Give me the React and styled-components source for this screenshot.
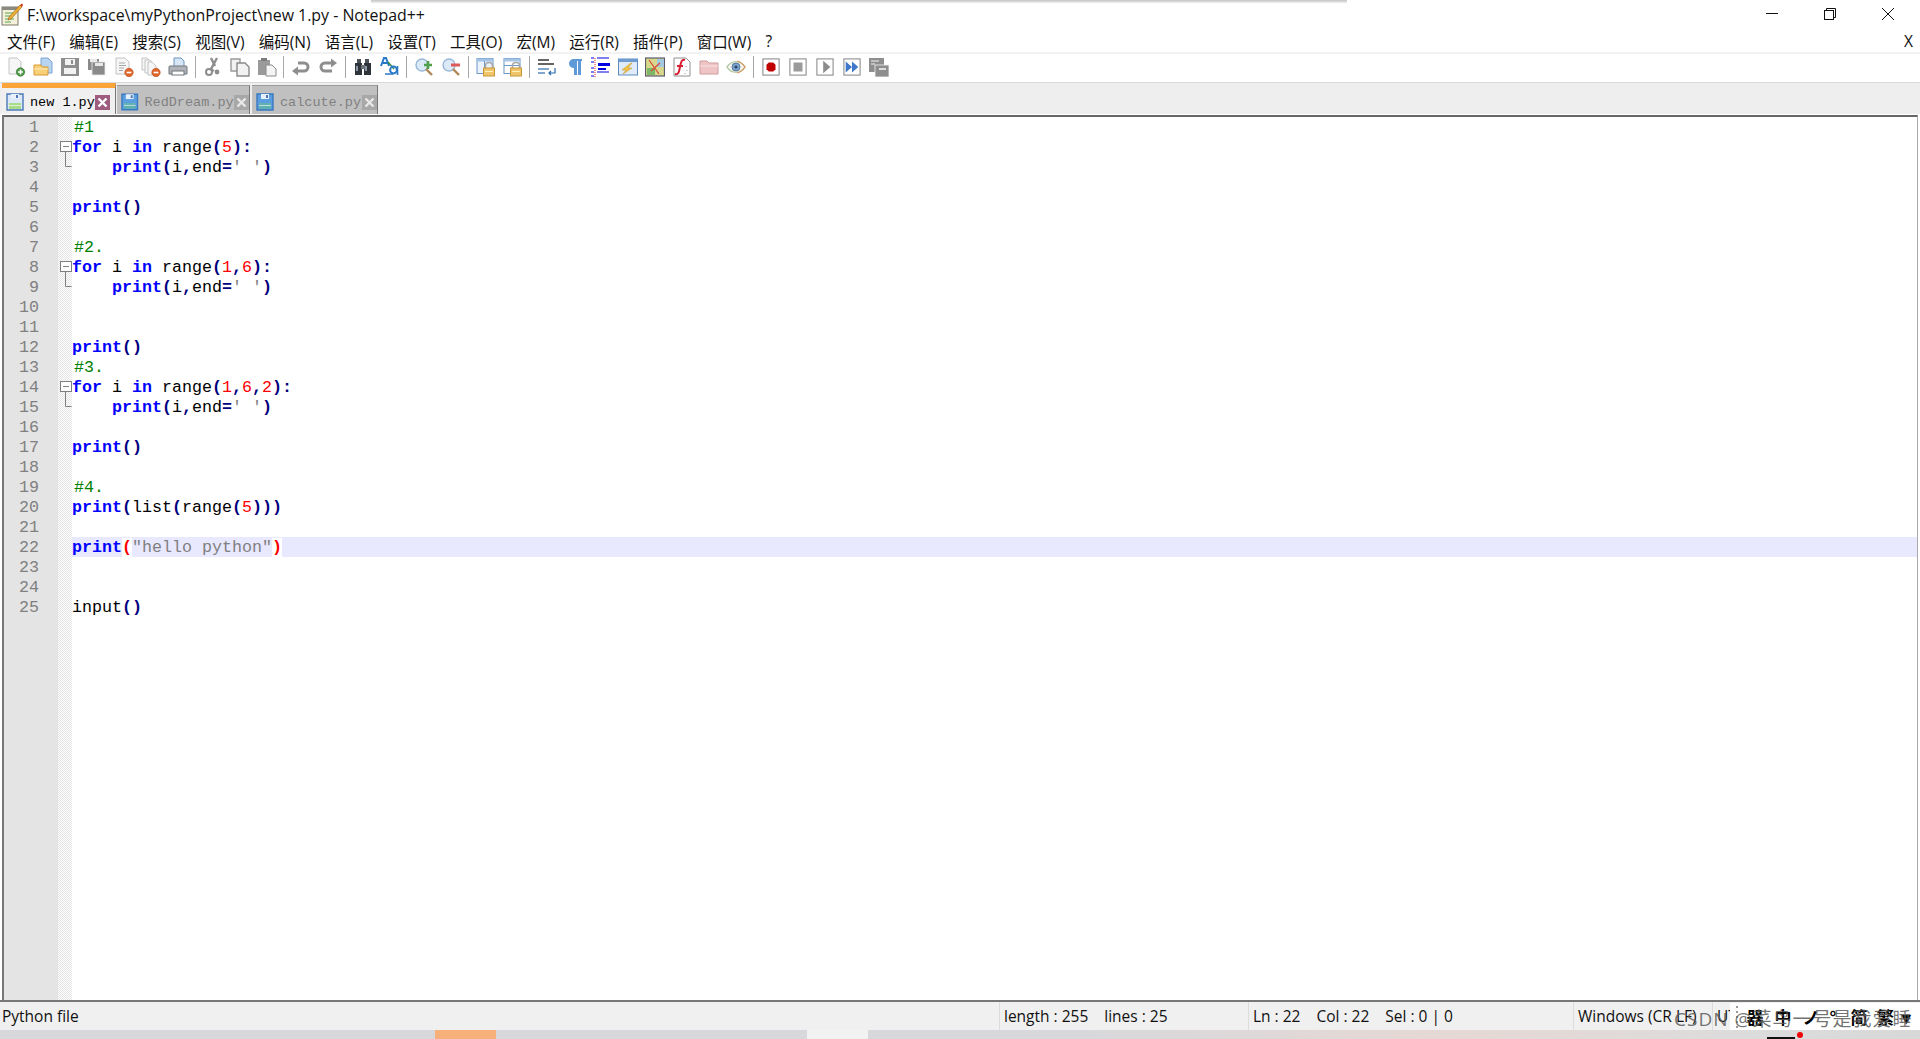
import React from 'react'
import styled, { createGlobalStyle } from 'styled-components'

const GlobalStyle = createGlobalStyle`
  html, body { margin: 0; padding: 0; background: #fff; overflow: hidden; }
  * { box-sizing: border-box; }
  #root { height: 100vh; }
`

const UI_FONT = `"Open Sans", "Noto Sans", "Noto Sans CJK SC", sans-serif`
const CODE_FONT = `"Liberation Mono", "Noto Sans CJK SC", monospace`

const Window = styled.div`
  position: relative;
  height: 1039px;
  display: flex;
  flex-direction: column;
  background: #fff;
  color: #000;
  font-family: ${UI_FONT};
  overflow: hidden;
`

const TopShadow = styled.div`
  position: absolute;
  left: 371px;
  top: 0;
  width: 976px;
  height: 3px;
  background: linear-gradient(#c4c4c4, #f0f0f0);
`

const TitleBar = styled.div`
  height: 30px;
  flex: none;
  display: flex;
  align-items: center;
  padding-left: 1px;
  font-size: 15.9px;
  color: #111;
`

const TitleText = styled.span`
  margin-left: 4px;
  white-space: nowrap;
`

const WindowControls = styled.div`
  margin-left: auto;
  margin-top: -2px;
  display: flex;
  align-items: center;
  padding-right: 26px;
  gap: 46px;
  svg { display: block; }
`

const MenuBar = styled.div`
  height: 22px;
  flex: none;
  display: flex;
  align-items: center;
  gap: 14.2px;
  padding: 0 7px;
  font-size: 15.5px;
  color: #111;
`

const MenuItem = styled.span`
  white-space: nowrap;
`

const MenuClose = styled.span`
  margin-left: auto;
  font-size: 15.5px;
`

const Toolbar = styled.div`
  height: 31px;
  flex: none;
  display: flex;
  align-items: center;
  padding-left: 2.5px;
  padding-bottom: 2px;
  border-top: 2px solid #f2f2f2;
  border-bottom: 1px solid #dadada;
`

const ToolButton = styled.div`
  width: 27px;
  height: 24px;
  flex: none;
  display: flex;
  align-items: center;
  justify-content: center;
`

const ToolSep = styled.div`
  width: 1px;
  height: 22px;
  flex: none;
  margin: 0 3.25px;
  background: #a8a8a8;
`

const TabStrip = styled.div`
  height: 32px;
  flex: none;
  display: flex;
  align-items: flex-end;
  gap: 1px;
  padding-left: 2px;
  background: #eeeeee;
  border-bottom: 1px solid #fff;
`

const Tab = styled.div`
  display: flex;
  align-items: center;
  width: ${p => p.$width}px;
  height: ${p => (p.$active ? 31 : 29)}px;
  margin-right: ${p => p.$gap || 0}px;
  padding-left: 3px;
  padding-top: ${p => (p.$active ? 2 : 4)}px;
  background: ${p => (p.$active ? '#f0f0f0' : '#c0c0c0')};
  border-top: ${p => (p.$active ? '5px solid #fba43a' : '1px solid #9a9a9a')};
  border-right: 1px solid #777;
  color: ${p => (p.$active ? '#000' : '#808080')};
  font-family: ${CODE_FONT};
  font-size: 13.5px;
  white-space: nowrap;
`

const TabLabel = styled.span`
  margin-left: 5px;
  width: ${p => p.$width}px;
`

const TabClose = styled.span`
  width: 15px;
  height: 15px;
  flex: none;
  display: flex;
  align-items: center;
  justify-content: center;
  background: ${p => (p.$active ? '#a05c7e' : '#a8a8a8')};
`

const Editor = styled.div`
  flex: 1;
  min-height: 0;
  display: flex;
  margin-left: 2px;
  margin-right: 2px;
  border-top: 2px solid #666;
  border-left: 2px solid #777;
  border-right: 1px solid #aaa;
  position: relative;
`

const Gutter = styled.div`
  width: 54px;
  flex: none;
  background: #e4e4e4;
`

const FoldMargin = styled.div`
  width: 14px;
  flex: none;
  background-color: #f4f4f4;
  background-image: conic-gradient(#e4e4e4 25%, #fff 0 50%, #e4e4e4 0 75%, #fff 0);
  background-size: 2px 2px;
`

const CodeArea = styled.div`
  flex: 1;
  min-width: 0;
  font-family: ${CODE_FONT};
  font-size: 16.67px;
`

const LineNo = styled.div`
  height: 20px;
  line-height: 22px;
  padding-right: 19px;
  text-align: right;
  color: #808080;
  font-family: ${CODE_FONT};
  font-size: 16.67px;
`

const FoldCell = styled.div`
  height: 20px;
  svg { display: block; }
`

const CodeLine = styled.div`
  height: 20px;
  line-height: 22px;
  white-space: pre;
  background: ${p => (p.$current ? '#e8e8ff' : 'transparent')};
  padding-left: ${p => (p.$comment ? 2 : 0)}px;
`

const Keyword = styled.span`
  color: #0000ff;
  font-weight: bold;
`
const Plain = styled.span`
  color: #000;
`
const Num = styled.span`
  color: #ff0000;
`
const Op = styled.span`
  color: #000080;
  font-weight: bold;
`
const Str = styled.span`
  color: #808080;
`
const Comment = styled.span`
  color: #008000;
`
const Brace = styled.span`
  color: #ff0000;
  font-weight: bold;
  background: #fff;
`

const StatusBar = styled.div`
  height: 30px;
  flex: none;
  display: flex;
  align-items: stretch;
  background: #f0f0f0;
  border-top: 2px solid #777;
  font-size: 15.5px;
  color: #111;
`

const StatusCell = styled.div`
  width: ${p => p.$width}px;
  flex: ${p => (p.$grow ? 1 : 'none')};
  display: flex;
  align-items: center;
  gap: 16px;
  padding-left: ${p => p.$pad ?? 4}px;
  border-right: ${p => (p.$grow ? 'none' : '1px solid #dcdcdc')};
  white-space: nowrap;
  overflow: hidden;
`

const ImeBar = styled.div`
  position: absolute;
  right: 0;
  bottom: 9px;
  width: 190px;
  height: 27px;
  display: flex;
  align-items: center;
  background: #fff;
  font-family: "Noto Sans CJK SC", sans-serif;
  font-size: 17px;
  font-weight: 700;
  color: #000;
`

const ImeGrip = styled.div`
  width: 2px;
  height: 22px;
  margin: 0 3px 0 6px;
  background: repeating-linear-gradient(#999 0 2px, transparent 2px 5px);
`

const ImeGlyph = styled.span`
  width: ${p => p.$width}px;
  flex: none;
  text-align: center;
`

const Watermark = styled.div`
  position: absolute;
  left: 1674px;
  bottom: 7px;
  font-family: "Open Sans", "Noto Sans CJK SC", sans-serif;
  font-size: 19px;
  letter-spacing: 1px;
  color: rgba(90, 90, 90, 0.85);
  white-space: nowrap;
`

const DesktopStrip = styled.div`
  position: relative;
  height: 9px;
  flex: none;
  display: flex;
`

const StripPart = styled.div`
  width: ${p => p.$width}px;
  flex: ${p => (p.$grow ? 1 : 'none')};
  background: ${p => p.$bg};
`

const TrayMark = styled.div`
  position: absolute;
  left: 1767px;
  bottom: 0;
  width: 28px;
  height: 2px;
  background: #111;
`

const TrayDot = styled.div`
  position: absolute;
  left: 1797px;
  top: 2px;
  width: 6px;
  height: 6px;
  border-radius: 50%;
  background: #f00000;
`

/* ---- toolbar icons, all drawn on a 20x20 grid ---- */

const Svg = ({ children, size = 20 }) => (
  <svg width={size} height={size} viewBox="0 0 20 20" fill="none">{children}</svg>
)

const Page = ({ x = 3, y = 1, w = 12, h = 16, fill = '#f6f6f6', stroke = '#c4c4c4' }) => (
  <path d={`M${x} ${y}h${w - 4}l4 4v${h - 4}h-${w}z`} fill={fill} stroke={stroke} />
)

const OrangeBadge = () => (
  <>
    <circle cx="15" cy="15.5" r="4.2" fill="#e0652a" stroke="#b84a18" strokeWidth=".6" />
    <rect x="12.6" y="14.7" width="4.8" height="1.6" fill="#fff" />
  </>
)

const Lock = () => (
  <>
    <path d="M9.5 11V8.5a3.5 3 0 0 1 7 0V11" stroke="#a8a8a8" strokeWidth="1.6" />
    <rect x="7.5" y="11" width="11" height="8" fill="#f0c468" stroke="#c89838" />
    <rect x="9" y="14" width="8" height="1" fill="#fff0c0" />
  </>
)

const LockWindow = ({ second }) => (
  <Svg>
    <rect x="1" y="1.5" width="16" height="15" fill={second ? '#fff' : '#eaf2fb'} stroke="#6d98c8" />
    <rect x="1" y="1.5" width="16" height="3" fill="#a4c4e6" />
    {second ? <rect x="1" y="8" width="16" height="1" fill="#6d98c8" /> : <rect x="8" y="4" width="1" height="12" fill="#6d98c8" />}
    <Lock />
  </Svg>
)

const MacroBox = ({ children }) => (
  <Svg size={18}>
    <rect x="1" y="1" width="18" height="18" fill="#fff" stroke="#8c8c8c" strokeWidth="1.2" />
    {children}
  </Svg>
)

const toolIcons = {
  newFile: (
    <Svg><Page /><circle cx="14.5" cy="15" r="4.2" fill="#4d9a45" stroke="#2f6e2b" strokeWidth=".6" />
      <path d="M12 15h5M14.5 12.5v5" stroke="#fff" strokeWidth="1.5" /></Svg>
  ),
  open: (
    <Svg>
      <path d="M8 1h7l4 4v11H8z" fill="#b8d4f0" stroke="#7ca4d0" />
      <path d="M1 8h7l1.5 2H15v8H1z" fill="#f8d078" stroke="#d89830" />
      <path d="M1 12h14" stroke="#fcecc0" />
    </Svg>
  ),
  save: (
    <Svg>
      <path d="M1 1h18v18H1z" fill="#8e8e8e" />
      <rect x="5" y="2" width="10" height="6" fill="#f2f2f2" />
      <rect x="11" y="3" width="2" height="4" fill="#8e8e8e" />
      <rect x="4" y="11" width="12" height="6" fill="#f2f2f2" />
    </Svg>
  ),
  saveAll: (
    <Svg>
      <rect x="1" y="2" width="11" height="11" fill="#8a8a8a" />
      <rect x="3" y="2" width="7" height="3" fill="#e8e8e8" />
      <rect x="5" y="5" width="13" height="13" fill="#8a8a8a" stroke="#e8e8e8" strokeWidth=".8" />
      <rect x="8" y="6" width="8" height="3" fill="#e8e8e8" />
    </Svg>
  ),
  closeFile: (
    <Svg><Page x={2} w={13} />
      <path d="M5 6h6M5 8.5h7M5 11h5M5 13.5h4" stroke="#a8a8a8" /><OrangeBadge /></Svg>
  ),
  closeAll: (
    <Svg>
      <Page x={1} y={1} w={9} h={12} />
      <Page x={4} y={3} w={9} h={13} />
      <Page x={7} y={5} w={8} h={13} />
      <OrangeBadge />
    </Svg>
  ),
  print: (
    <Svg>
      <path d="M6 1h7l3 3v6H6z" fill="#d6e6f6" stroke="#6a94c0" />
      <path d="M2 9h16a1 1 0 0 1 1 1v7H1v-7a1 1 0 0 1 1-1z" fill="#b0b4b8" stroke="#70767c" />
      <rect x="4" y="14" width="12" height="4" fill="#fff" stroke="#70767c" />
    </Svg>
  ),
  cut: (
    <Svg>
      <path d="M14 1l-6 11M8 1l4 8" stroke="#8c8c8c" strokeWidth="2.4" />
      <circle cx="6" cy="15" r="3" stroke="#8c8c8c" strokeWidth="2" />
      <circle cx="14" cy="15" r="2.4" fill="#8c8c8c" />
      <path d="M8 12l3 2" stroke="#8c8c8c" strokeWidth="2" />
    </Svg>
  ),
  copy: (
    <Svg>
      <path d="M1 2h9v12H1z" fill="#f2f2f2" stroke="#9a9a9a" strokeWidth="1.4" />
      <path d="M7 6h8l4 4v9H7z" fill="#f2f2f2" stroke="#8a8a8a" strokeWidth="1.4" />
    </Svg>
  ),
  paste: (
    <Svg>
      <path d="M1 3h12v15H1z" fill="#9a9a9a" />
      <rect x="4" y="1" width="6" height="3" fill="#7c7c7c" />
      <path d="M9 8h6l4 4v7H9z" fill="#f4f4f4" stroke="#8a8a8a" />
    </Svg>
  ),
  undo: (
    <Svg>
      <path d="M7 6h6a4 4 0 0 1 0 8H6" stroke="#8e8e8e" strokeWidth="3" />
      <path d="M1 14l6-4.5v9z" fill="#8e8e8e" />
    </Svg>
  ),
  redo: (
    <Svg>
      <path d="M13 6H7a4 4 0 0 0 0 8h7" stroke="#8e8e8e" strokeWidth="3" />
      <path d="M19 6l-6-4.5v9z" fill="#8e8e8e" />
    </Svg>
  ),
  find: (
    <Svg>
      <rect x="4" y="2" width="4" height="5" fill="#4a5058" />
      <rect x="12" y="2" width="4" height="5" fill="#4a5058" />
      <rect x="2" y="6" width="7" height="12" fill="#2e343a" />
      <rect x="11" y="6" width="7" height="12" fill="#2e343a" />
      <rect x="8" y="8" width="4" height="4" fill="#6a7078" />
      <rect x="3" y="9" width="2" height="5" fill="#8a98a8" />
      <rect x="12" y="9" width="2" height="5" fill="#8a98a8" />
    </Svg>
  ),
  replace: (
    <Svg>
      <path d="M1 9l3-8h2l3 8M2.5 6h5" stroke="#2a78c8" strokeWidth="2" />
      <path d="M8 5l6 7" stroke="#3a8a48" strokeWidth="1.5" />
      <circle cx="13.5" cy="13" r="3.4" stroke="#2a78c8" strokeWidth="2" />
      <path d="M17.5 9v9M5 17h8" stroke="#2a78c8" strokeWidth="1.6" />
    </Svg>
  ),
  zoomIn: (
    <Svg>
      <circle cx="8" cy="8" r="6" fill="#dceaf8" stroke="#9ab8d8" strokeWidth="1.4" />
      <path d="M12 12l6 6" stroke="#b08858" strokeWidth="2.4" />
      <path d="M10 8h8M14 4v8" stroke="#4ea04a" strokeWidth="2.6" />
    </Svg>
  ),
  zoomOut: (
    <Svg>
      <circle cx="8" cy="8" r="6" fill="#dceaf8" stroke="#9ab8d8" strokeWidth="1.4" />
      <path d="M12 12l6 6" stroke="#b08858" strokeWidth="2.4" />
      <path d="M10 8h9" stroke="#e05a5a" strokeWidth="3" />
    </Svg>
  ),
  lockOne: <LockWindow />,
  lockTwo: <LockWindow second />,
  wrap: (
    <Svg>
      <path d="M1 3h11M1 7h16" stroke="#333" strokeWidth="1.4" />
      <path d="M1 12h11M1 16h7" stroke="#5a8ac0" strokeWidth="1.6" />
      <path d="M18 11v5h-6M14 14l-2 2 2 2" stroke="#2a6ab0" strokeWidth="1.2" />
    </Svg>
  ),
  para: (
    <Svg>
      <path d="M9 2h9v2h-1v14h-3V4h-1v14h-3v-7a4.5 4.5 0 0 1 -1-9z" fill="#5e9ad8" />
    </Svg>
  ),
  indent: (
    <Svg>
      <path d="M4 1v19" stroke="#e02020" strokeWidth="1" strokeDasharray="1 1" />
      <path d="M0 1h3M6 1h12M0 15h3M6 15h12" stroke="#0000e0" strokeWidth="1.2" />
      <path d="M0 5h3M0 11h3M0 19h3" stroke="#0000e0" strokeWidth="1.2" />
      <rect x="7" y="6" width="12" height="3" fill="#0000e0" />
      <rect x="7" y="11" width="8" height="2" fill="#0000e0" />
    </Svg>
  ),
  bolt: (
    <Svg>
      <rect x="0.5" y="2" width="19" height="16" fill="#dfeafa" stroke="#5f8cc0" />
      <rect x="0.5" y="2" width="19" height="3" fill="#6f9cd0" />
      <path d="M13 6l-9 7h4l-3 4 9-6h-4l4-5z" fill="#f0c040" stroke="#c89820" strokeWidth=".5" />
    </Svg>
  ),
  map: (
    <Svg>
      <rect x="0.5" y="1" width="19" height="18" fill="#d8d88c" stroke="#5a5a6a" strokeWidth="1.2" />
      <rect x="12" y="2" width="7" height="8" fill="#a4c8e0" />
      <rect x="2" y="11" width="8" height="7" fill="#7cb868" />
      <path d="M4 3l10 14M15 6l-9 8" stroke="#d84838" strokeWidth="1.2" />
    </Svg>
  ),
  funcDoc: (
    <Svg>
      <Page x={2} w={16} h={18} stroke="#909090" fill="#fff" />
      <path d="M13 3c-4-1-4 3-5 7s-1 8-5 7M5 9h6" stroke="#d82030" strokeWidth="2" />
      <path d="M14 9v1M15 13v1M13 16v1" stroke="#a0a0a0" />
    </Svg>
  ),
  folder: (
    <Svg>
      <path d="M1 4h7l2 2h9v11H1z" fill="#eec4c4" stroke="#d09c9c" />
      <path d="M1 9h18" stroke="#f8e4e4" />
    </Svg>
  ),
  eye: (
    <Svg>
      <path d="M1 10c4-7 14-7 18 0-4 7-14 7-18 0z" fill="#f4f4ee" stroke="#a8c098" strokeWidth="1.2" />
      <path d="M11 4c4 1 6 3 8 6-2 3-4 5-8 6" stroke="#d89860" strokeWidth="1.2" />
      <circle cx="10" cy="10" r="4" fill="#7ca4d0" stroke="#587898" />
      <circle cx="10" cy="10" r="1.6" fill="#2c4868" />
    </Svg>
  ),
  record: (
    <MacroBox><path d="M7.5 5h5l2.5 2.5v5L12.500 15h-5L5 12.500v-5z" fill="#c00000" /></MacroBox>
  ),
  stop: (
    <MacroBox><rect x="5" y="5" width="10" height="10" fill="#9a9a9a" /></MacroBox>
  ),
  play: (
    <MacroBox><path d="M8 3l8 7-8 7z" fill="#8c8c8c" /></MacroBox>
  ),
  playMany: (
    <MacroBox><path d="M3 4l7 6-7 6zM10 4l7 6-7 6z" fill="#3f78c8" /></MacroBox>
  ),
  saveMacro: (
    <Svg>
      <rect x="0" y="1" width="15" height="14" fill="#8e8e8e" />
      <path d="M2 4h8M2 7h4" stroke="#f2f2f2" strokeWidth="1.2" />
      <rect x="6" y="8" width="14" height="12" fill="#8e8e8e" stroke="#f2f2f2" strokeWidth=".8" />
      <path d="M10 12h7" stroke="#f2f2f2" strokeWidth="1.6" />
    </Svg>
  ),
}

const toolbar = [
  'newFile', 'open', 'save', 'saveAll', 'closeFile', 'closeAll', 'print', '|',
  'cut', 'copy', 'paste', '|',
  'undo', 'redo', '|',
  'find', 'replace', '|',
  'zoomIn', 'zoomOut', '|',
  'lockOne', 'lockTwo', '|',
  'wrap', 'para', 'indent', 'bolt', 'map', 'funcDoc', 'folder', 'eye', '|',
  'record', 'stop', 'play', 'playMany', 'saveMacro',
]

const menus = ['文件(F)', '编辑(E)', '搜索(S)', '视图(V)', '编码(N)', '语言(L)', '设置(T)', '工具(O)', '宏(M)', '运行(R)', '插件(P)', '窗口(W)', '?']

const printRange = (...args) => [
  [Keyword, 'for'], [Plain, ' i '], [Keyword, 'in'], [Plain, ' range'], [Op, '('],
  ...args, [Op, ')'], [Op, ':'],
]
const printLoop = [
  [Plain, '    '], [Keyword, 'print'], [Op, '('], [Plain, 'i'], [Op, ','], [Plain, 'end'], [Op, '='], [Str, "' '"], [Op, ')'],
]
const printEmpty = [[Keyword, 'print'], [Op, '('], [Op, ')']]

const lines = [
  { code: [[Comment, '#1']], comment: true },
  { code: printRange([Num, '5']), fold: 'head' },
  { code: printLoop, fold: 'tail' },
  {},
  { code: printEmpty },
  {},
  { code: [[Comment, '#2.']], comment: true },
  { code: printRange([Num, '1'], [Op, ','], [Num, '6']), fold: 'head' },
  { code: printLoop, fold: 'tail' },
  {},
  {},
  { code: printEmpty },
  { code: [[Comment, '#3.']], comment: true },
  { code: printRange([Num, '1'], [Op, ','], [Num, '6'], [Op, ','], [Num, '2']), fold: 'head' },
  { code: printLoop, fold: 'tail' },
  {},
  { code: printEmpty },
  {},
  { code: [[Comment, '#4.']], comment: true },
  { code: [[Keyword, 'print'], [Op, '('], [Plain, 'list'], [Op, '('], [Plain, 'range'], [Op, '('], [Num, '5'], [Op, ')))']] },
  {},
  { code: [[Keyword, 'print'], [Brace, '('], [Str, '"hello python"'], [Brace, ')']], current: true },
  {},
  {},
  { code: [[Plain, 'input'], [Op, '('], [Op, ')']] },
]

const FoldMark = ({ type }) => (
  <svg width="14" height="20" viewBox="0 0 14 20" fill="none">
    {type === 'head' ? (
      <>
        <rect x="2.500" y="4.500" width="11" height="10" fill="#fff" stroke="#808080" />
        <path d="M5 9.500h6" stroke="#808080" />
        <path d="M7.500 14.500V20" stroke="#808080" />
      </>
    ) : (
      <path d="M7.500 0v9.500h6" stroke="#808080" />
    )}
  </svg>
)

const SaveIcon = ({ active }) => (
  <svg width="20" height="20" viewBox="0 0 20 20" fill="none">
    <path d="M2 2h16v16H2z" fill={active ? '#dce8f8' : '#5a9ee0'} stroke={active ? '#4a78b8' : '#3a78c0'} strokeWidth="1.4" />
    <rect x="6" y="2" width="8" height="5" fill="#e8f0fa" />
    <rect x="11" y="3" width="2" height="3" fill="#4a78b8" />
    <rect x="4" y="11" width="12" height="6" fill={active ? '#a8dc88' : '#60b0b0'} />
    <rect x="4" y="13" width="12" height="1" fill="#fff" opacity=".6" />
  </svg>
)

const CloseCross = ({ active }) => (
  <svg width="11" height="11" viewBox="0 0 11 11">
    <path d="M1.500 1.500l8 8M9.500 1.500l-8 8" stroke={active ? '#fff' : '#e8e8e8'} strokeWidth="2.400" />
  </svg>
)

const tabs = [
  { name: 'new 1.py', width: 114, label: 65, active: true },
  { name: 'RedDream.py', width: 133, label: 92, gap: 1 },
  { name: 'calcute.py', width: 126, label: 82 },
]

function App() {
  return (
    <Window>
      <GlobalStyle />
      <TopShadow />

      <TitleBar>
        <svg width="22" height="24" viewBox="0 0 22 24" fill="none">
          <rect x="1" y="4" width="16" height="18" fill="#f4f0dc" stroke="#7c7868" />
          <path d="M1 4h16v3H1z" fill="#8a8a80" />
          <path d="M4 10h9M4 13h7M4 16h9M4 19h6" stroke="#58a848" />
          <path d="M7 17l1-3L19 2l2 2L10 16z" fill="#e8b030" stroke="#a05820" strokeWidth=".6" />
          <path d="M19 2l2 2 1-2-1-1.500z" fill="#d03020" />
        </svg>
        <TitleText>F:\workspace\myPythonProject\new 1.py - Notepad++</TitleText>
        <WindowControls>
          <svg width="12" height="12" viewBox="0 0 12 12"><path d="M0 5.500h12" stroke="#111" /></svg>
          <svg width="12" height="12" viewBox="0 0 12 12" fill="none">
            <rect x=".5" y="2.500" width="9" height="9" stroke="#111" />
            <path d="M2.500 2.500v-2h9v9h-2" stroke="#111" />
          </svg>
          <svg width="12" height="12" viewBox="0 0 12 12"><path d="M0 0l12 12M12 0L0 12" stroke="#111" /></svg>
        </WindowControls>
      </TitleBar>

      <MenuBar>
        {menus.map(m => <MenuItem key={m}>{m}</MenuItem>)}
        <MenuClose>X</MenuClose>
      </MenuBar>

      <Toolbar>
        {toolbar.map((name, i) =>
          name === '|' ? <ToolSep key={i} /> : <ToolButton key={i}>{toolIcons[name]}</ToolButton>
        )}
      </Toolbar>

      <TabStrip>
        {tabs.map(t => (
          <Tab key={t.name} $active={t.active} $width={t.width} $gap={t.gap}>
            <SaveIcon active={t.active} />
            <TabLabel $width={t.label}>{t.name}</TabLabel>
            <TabClose $active={t.active}><CloseCross active={t.active} /></TabClose>
          </Tab>
        ))}
      </TabStrip>

      <Editor>
        <Gutter>
          {lines.map((_, i) => <LineNo key={i}>{i + 1}</LineNo>)}
        </Gutter>
        <FoldMargin>
          {lines.map((l, i) => (
            <FoldCell key={i}>{l.fold && <FoldMark type={l.fold} />}</FoldCell>
          ))}
        </FoldMargin>
        <CodeArea>
          {lines.map((l, i) => (
            <CodeLine key={i} $current={l.current} $comment={l.comment}>
              {(l.code || []).map(([Token, text], j) => <Token key={j}>{text}</Token>)}
            </CodeLine>
          ))}
        </CodeArea>
      </Editor>

      <StatusBar>
        <StatusCell $width={1000} $pad={2}>Python file</StatusCell>
        <StatusCell $width={249}><span>length : 255</span><span>lines : 25</span></StatusCell>
        <StatusCell $width={325}><span>Ln : 22</span><span>Col : 22</span><span>Sel : 0 | 0</span></StatusCell>
        <StatusCell $width={139}>Windows (CR LF)</StatusCell>
        <StatusCell $grow>UTF-8</StatusCell>
      </StatusBar>

      <ImeBar>
        <ImeGrip />
        <ImeGlyph $width={28}>器</ImeGlyph>
        <ImeGlyph $width={28}>中</ImeGlyph>
        <ImeGlyph $width={28}>ノ</ImeGlyph>
        <ImeGlyph $width={16}>°</ImeGlyph>
        <ImeGlyph $width={36}>简</ImeGlyph>
        <ImeGlyph $width={16}>繁</ImeGlyph>
        <ImeGlyph $width={27}>▾</ImeGlyph>
      </ImeBar>
      <Watermark>CSDN @菜鸟一号是我爱睡</Watermark>

      <DesktopStrip>
        <StripPart $width={435} $bg="#d8d8dc" />
        <StripPart $width={61} $bg="#f8b07a" />
        <StripPart $width={311} $bg="#d8d8dc" />
        <StripPart $width={61} $bg="#f2f2f2" />
        <StripPart $grow $bg="linear-gradient(90deg, #d8d8dc, #d8d8dc 20%, #e6d8d4 55%, #dcdcdc 85%, #d8d8d8)" />
        <TrayMark />
        <TrayDot />
      </DesktopStrip>
    </Window>
  )
}

export default App
